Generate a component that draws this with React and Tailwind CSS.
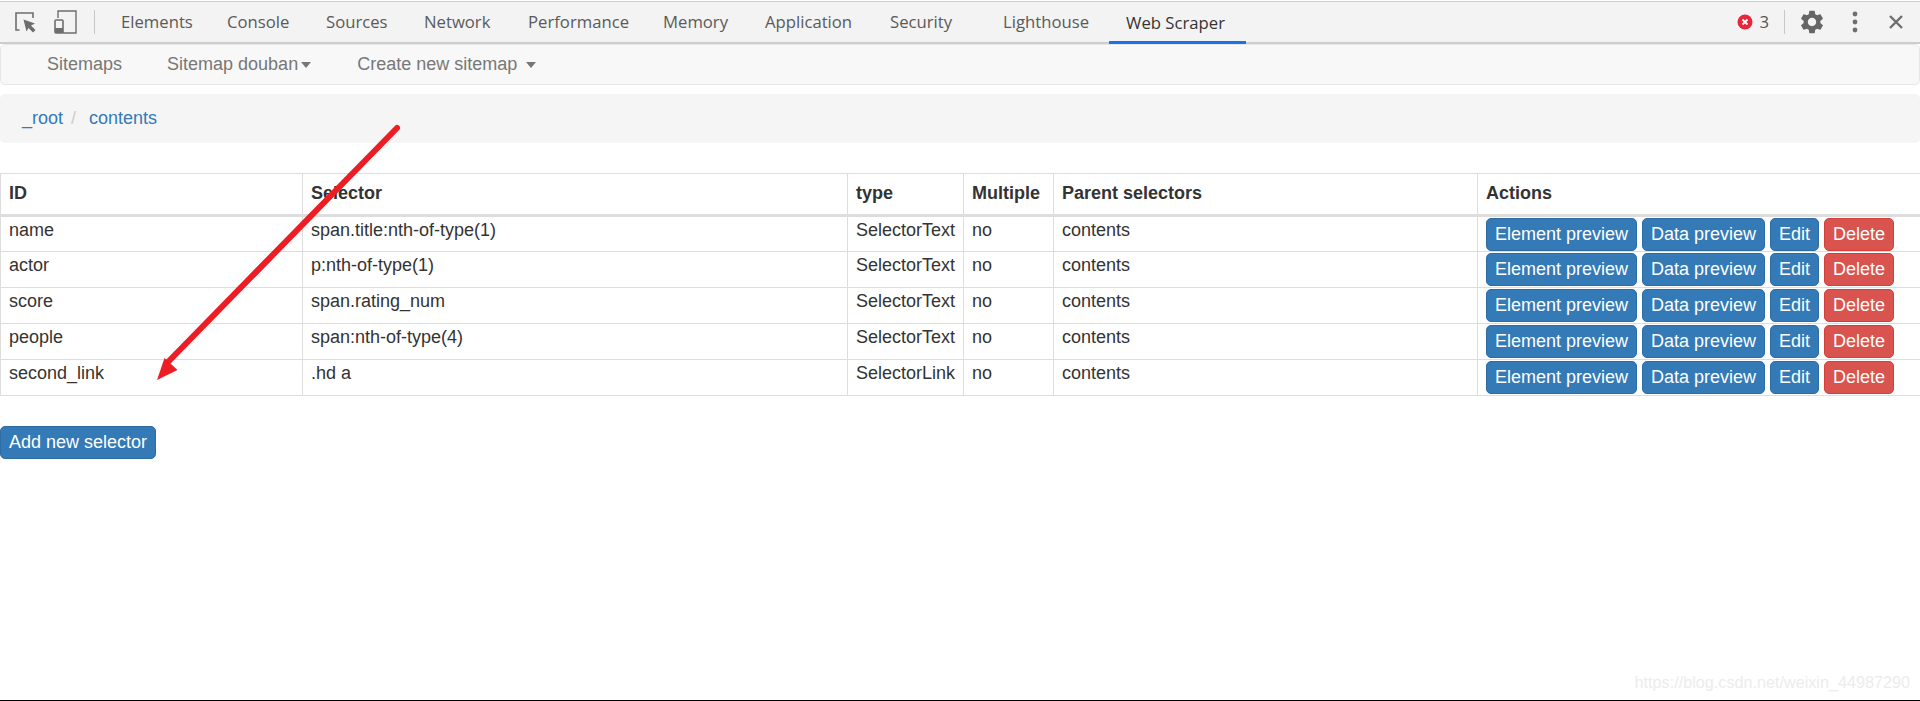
import { MdSettings } from 'react-icons/md';

const tabs = [
  { name: 'Elements', cls: 'w-[106px]' },
  { name: 'Console', cls: 'w-[99px]' },
  { name: 'Sources', cls: 'w-[98px]' },
  { name: 'Network', cls: 'w-[104px]' },
  { name: 'Performance', cls: 'w-[135px]' },
  { name: 'Memory', cls: 'w-[102px]' },
  { name: 'Application', cls: 'w-[125px]' },
  { name: 'Security', cls: 'w-[113px]' },
  { name: 'Lighthouse', cls: 'w-[123px]' },
];

const selectors = [
  { id: 'name', selector: 'span.title:nth-of-type(1)', type: 'SelectorText' },
  { id: 'actor', selector: 'p:nth-of-type(1)', type: 'SelectorText' },
  { id: 'score', selector: 'span.rating_num', type: 'SelectorText' },
  { id: 'people', selector: 'span:nth-of-type(4)', type: 'SelectorText' },
  { id: 'second_link', selector: '.hd a', type: 'SelectorLink' },
];

function Btn({ children, red, className = '' }) {
  return (
    <button
      className={`h-[33px] pb-[2px] rounded-[5px] border text-[18px] leading-none text-white ${
        red ? 'bg-[#d9534f] border-[#d43f3a]' : 'bg-[#337ab7] border-[#2e6da4]'
      } ${className}`}
    >
      {children}
    </button>
  );
}

function Caret() {
  return <span className="inline-block w-0 h-0 border-x-[5px] border-x-transparent border-t-[6px] border-t-[#777]" />;
}

function Toolbar() {
  return (
    <div className="h-[43px] mt-px flex items-center bg-[#f3f3f3] border-t border-t-[#cccccc] border-b-2 border-b-[#cdcdcd] font-['Open_Sans',sans-serif] text-[16.7px] text-[#5a5a5a]">
      <svg className="ml-[15px] shrink-0" width="21" height="21" viewBox="0 0 21 21" fill="none">
        <path d="M4.500 18H1V1H18V6" stroke="#6e6e6e" strokeWidth="1.6" />
        <path d="M8.500 7.500 L20 11.500 L16 13.500 L20.500 18 L18 20.500 L13.500 16 L11.500 19.500 Z" fill="#6e6e6e" />
      </svg>
      <svg className="ml-[18px] shrink-0" width="23" height="24" viewBox="0 0 23 24" fill="none">
        <path d="M4 8V1h18v22H9" stroke="#6e6e6e" strokeWidth="1.4" />
        <rect x="1" y="10" width="8" height="13" rx="1" stroke="#6e6e6e" strokeWidth="1.6" />
        <rect x="1" y="18" width="8" height="5" fill="#6e6e6e" />
      </svg>
      <div className="ml-[17px] w-px h-[24px] bg-[#c8c8c8]" />
      <div className="ml-[9px] flex h-full">
        {tabs.map((t) => (
          <div key={t.name} className={`${t.cls} pl-[17px] flex items-center`}>
            {t.name}
          </div>
        ))}
        <div className="w-[137px] pl-[17px] pt-[3px] flex items-center text-[#333] border-b-[3px] border-b-[#1a73e8] -mb-0.5">Web Scraper</div>
      </div>
      <div className="ml-auto flex items-center">
        <svg width="16" height="16" viewBox="0 0 16 16">
          <circle cx="8" cy="8" r="7.500" fill="#e8263a" />
          <path d="M5.500 5.500l5 5M10.500 5.500l-5 5" stroke="#fff" strokeWidth="1.800" />
        </svg>
        <span className="ml-[6px] text-[#555]">3</span>
        <div className="ml-[15px] w-px h-[24px] bg-[#c8c8c8]" />
        <MdSettings className="ml-[13px] text-[#666]" size={28} />
        <svg className="ml-[26px]" width="6" height="22" viewBox="0 0 6 22" fill="#6e6e6e">
          <circle cx="3" cy="3" r="2.400" />
          <circle cx="3" cy="11" r="2.400" />
          <circle cx="3" cy="19" r="2.400" />
        </svg>
        <svg className="ml-[30px] mr-[16px]" width="16" height="16" viewBox="0 0 16 16">
          <path d="M2 2l12 12M14 2L2 14" stroke="#6e6e6e" strokeWidth="2.400" />
        </svg>
      </div>
    </div>
  );
}

function Cell({ children }) {
  return <td className="border border-[#dddddd] px-2 pt-[3px] pb-0 align-top leading-5">{children}</td>;
}

function SelectorTable() {
  return (
    <table className="mt-[30px] w-[1920px] table-fixed border-collapse text-[18px] text-[#333]">
      <colgroup>
        <col className="w-[302px]" />
        <col className="w-[545px]" />
        <col className="w-[116px]" />
        <col className="w-[90px]" />
        <col className="w-[424px]" />
        <col className="w-[443px]" />
      </colgroup>
      <thead>
        <tr className="h-[42px] border-b-[3px] border-b-[#dddddd]">
          {['ID', 'Selector', 'type', 'Multiple', 'Parent selectors', 'Actions'].map((h) => (
            <th key={h} className="border border-[#dddddd] border-b-[3px] px-2 pb-0.5 text-left font-bold">
              {h}
            </th>
          ))}
        </tr>
      </thead>
      <tbody>
        {selectors.map((s) => (
          <tr key={s.id} className="h-[36px]">
            <Cell>{s.id}</Cell>
            <Cell>{s.selector}</Cell>
            <Cell>{s.type}</Cell>
            <Cell>no</Cell>
            <Cell>contents</Cell>
            <td className="border border-[#dddddd] px-2 align-top">
              <div className="flex gap-[5px] pt-px">
                <Btn className="w-[151px]">Element preview</Btn>
                <Btn className="w-[123px]">Data preview</Btn>
                <Btn className="w-[49px]">Edit</Btn>
                <Btn red className="w-[70px]">Delete</Btn>
              </div>
            </td>
          </tr>
        ))}
      </tbody>
    </table>
  );
}

export default function App() {
  return (
    <div className="relative h-[701px] w-[1920px] overflow-hidden bg-white flex flex-col font-['Liberation_Sans',Arial,sans-serif]">
      <Toolbar />
      <div className="h-[41px] flex items-center bg-[#f8f8f8] border border-[#e7e7e7] rounded-[5px] text-[18px] text-[#777]">
        <span className="ml-[46px]">Sitemaps</span>
        <span className="ml-[45px]">Sitemap douban</span>
        <span className="ml-[3px] mt-px flex"><Caret /></span>
        <span className="ml-[46px]">Create new sitemap</span>
        <span className="ml-[9px] mt-px flex"><Caret /></span>
      </div>
      <div className="mt-[9px] h-[49px] flex items-center bg-[#f5f5f5] rounded-[5px] text-[18px] text-[#337ab7]">
        <span className="ml-[22px]">_root</span>
        <span className="ml-2 text-[#cccccc]">/</span>
        <span className="ml-[13px]">contents</span>
      </div>
      <SelectorTable />
      <Btn className="mt-[30px] w-[156px]">Add new selector</Btn>
      <div className="mt-auto self-end mr-[10px] mb-[9px] text-[16.200px] leading-[18px] text-[#ececec]">https://blog.csdn.net/weixin_44987290</div>
      <div className="h-px bg-black" />
      {/* red annotation arrow on top of the table */}
      <svg className="absolute left-0 top-0 pointer-events-none" width="1920" height="701" fill="none">
        <path d="M397 128 L168 362" stroke="#ee1c25" strokeWidth="6" strokeLinecap="round" />
        <path d="M157 380 L164.500 358 L177.500 370 Z" fill="#ee1c25" />
      </svg>
    </div>
  );
}
